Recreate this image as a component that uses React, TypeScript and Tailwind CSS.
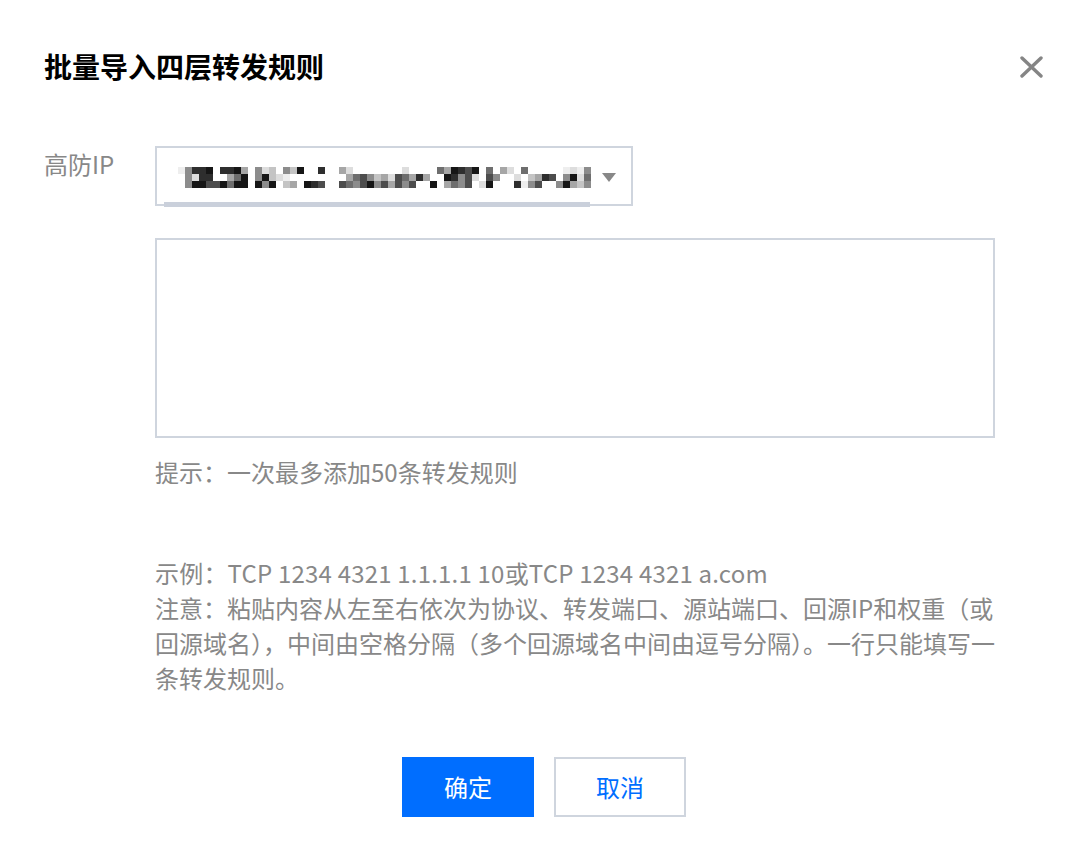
const maskRows = [
  "15889088940523053900800420000000200006498790604206000001215",
  "05288004690593210000000046753427648400985720750020348705926",
  "05997796990959034098700765795747570090465702900081570059435",
];

const grays = ["#ffffff", "#eeeeee", "#dddddd", "#c4c4c4", "#a6a6a6", "#8c8c8c", "#6e6e6e", "#4d4d4d", "#2e2e2e", "#161616"];

function MaskedValue() {
  return (
    <svg width="413" height="21" viewBox="0 0 413 21" className="block" shapeRendering="crispEdges">
      {maskRows.map((row, r) =>
        row.split("").map((c, i) => (
          <rect key={`${r}-${i}`} x={i * 7} y={r * 7} width="7" height="7" fill={grays[Number(c)]} />
        ))
      )}
    </svg>
  );
}

export default function App() {
  return (
    <div className="relative h-[856px] w-[1088px] bg-white px-[44px] font-['Noto_Sans_CJK_SC',sans-serif] text-[24px] text-[#888888]">
      <div className="flex h-[86px] items-end justify-between">
        <h1 className="text-[28px] font-bold leading-[40px] text-black">批量导入四层转发规则</h1>
        <button className="mb-[7px] mr-[1px] flex h-[24px] w-[24px] items-center justify-center">
          <svg width="23" height="22" viewBox="0 0 23 22" fill="none" stroke="#858585" strokeWidth="3.4" strokeLinecap="round">
            <path d="M2 2 L21 20 M21 2 L2 20" />
          </svg>
        </button>
      </div>

      <div className="mt-[60px] flex items-start">
        <label className="w-[111px] shrink-0 leading-[36px]">高防IP</label>
        <div className="flex flex-col">
          <div className="relative flex h-[60px] w-[478px] items-center border-2 border-[#cfd5de] pl-[21px] pr-[15px]">
            <div className="mt-[2px]">
              <MaskedValue />
            </div>
            <svg width="14" height="9" viewBox="0 0 14 9" className="ml-auto mt-[2px]">
              <path d="M0 0 H14 L7 9 Z" fill="#888888" />
            </svg>
            <div className="absolute bottom-[-3px] left-[7px] h-[5px] w-[426px] bg-[#cad0db]" />
          </div>

          <textarea className="mt-[32px] h-[200px] w-[840px] resize-none border-2 border-[#cfd5de] outline-none" />

          <p className="mt-[16px] leading-[36px]">提示：一次最多添加50条转发规则</p>

          <div className="mt-[65px] w-[840px] leading-[35px]">
            <p className="tracking-[0.2px]">示例：TCP 1234 4321 1.1.1.1 10或TCP 1234 4321 a.com</p>
            <p>
              注意：粘贴内容从左至右依次为协议、转发端口、源站端口、回源IP和权重（或回源域名），中间由空格分隔（多个回源域名中间由逗号分隔）。一行只能填写一条转发规则。
            </p>
          </div>
        </div>
      </div>

      <div className="mt-[62px] flex justify-center gap-[20px]">
        <button className="h-[60px] w-[132px] bg-[#006eff] text-[24px] text-white">确定</button>
        <button className="h-[60px] w-[132px] border-2 border-[#cfd5de] bg-white text-[24px] text-[#006eff]">取消</button>
      </div>
    </div>
  );
}
